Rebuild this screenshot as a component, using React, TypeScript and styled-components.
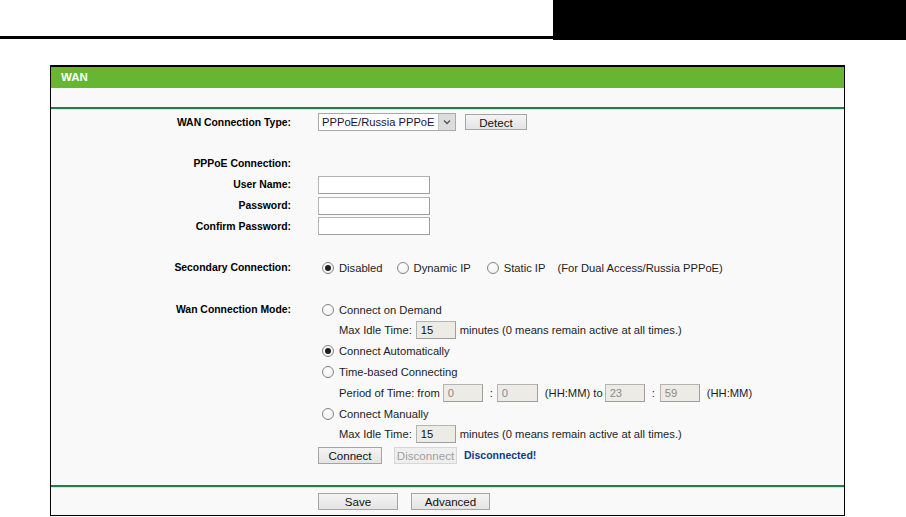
import React from 'react';
import styled, { createGlobalStyle, css } from 'styled-components';

const GlobalStyle = createGlobalStyle`
  html, body {
    margin: 0;
    padding: 0;
    background: #ffffff;
  }
  body {
    font-family: 'Liberation Sans', Arial, sans-serif;
    font-size: 11.2px;
    color: #1c1c24;
  }
`;

const TopBar = styled.div`
  display: flex;
  height: 40px;
`;
const TopRule = styled.div`
  flex: 1;
  border-bottom: 3px solid #000;
  box-sizing: border-box;
  height: 39px;
`;
const TopBlock = styled.div`
  width: 353px;
  background: #000;
`;

const Panel = styled.div`
  box-sizing: border-box;
  width: 795px;
  margin: 25px 0 0 50px;
  border: 1px solid #000;
  border-top-width: 2px;
  background: #f9f9f9;
`;

const PanelTitle = styled.div`
  height: 21px;
  background: #67b632;
  color: #fff;
  font-weight: bold;
  font-size: 11.5px;
  line-height: 21px;
  padding-left: 10px;
`;

const TitleSpacer = styled.div`
  height: 19px;
`;

const GreenRule = styled.div`
  height: 2px;
  background: #2a7a48;
  border-bottom: 1px solid #d6e6dc;
`;

const FormGrid = styled.div`
  display: grid;
  grid-template-columns: 240px 1fr;
  grid-auto-rows: 20.8px;
  column-gap: 27px;
  align-items: center;
  padding: 2px 0 19px;
`;

const Label = styled.div`
  text-align: right;
  font-weight: bold;
  font-size: 10.4px;
  color: #000;
  white-space: nowrap;
`;

const Value = styled.div<{ $indent?: boolean }>`
  display: flex;
  align-items: center;
  white-space: nowrap;
  ${(p) =>
    p.$indent &&
    css`
      padding-left: 21px;
    `}
`;

const Gap = styled.div`
  grid-column: 1 / -1;
`;

const FakeSelect = styled.div`
  box-sizing: border-box;
  width: 138px;
  height: 18px;
  display: flex;
  align-items: stretch;
  border: 1px solid #a9a9a9;
  background: #fff;
  color: #1a1040;
`;
const SelectText = styled.span`
  flex: 1;
  padding-left: 3px;
  line-height: 16px;
`;
const SelectArrow = styled.span`
  width: 16px;
  background: #dcdcdc;
  border-left: 1px solid #c4c4c4;
  display: flex;
  align-items: center;
  justify-content: center;
`;

const TextBox = styled.input<{ $w?: number; $muted?: boolean }>`
  box-sizing: border-box;
  width: ${(p) => p.$w ?? 112}px;
  height: 18px;
  margin: 0;
  padding: 0 4px;
  border: 1px solid #b4b4b4;
  border-right-color: #9e9e9e;
  border-bottom-color: #9e9e9e;
  background: ${(p) => (p.$muted ? '#ecebe6' : '#fff')};
  font-family: 'Liberation Sans', Arial, sans-serif;
  font-size: 11.2px;
  color: ${(p) => (p.$muted ? '#8a8a8a' : '#111')};
  outline: none;
`;

const Btn = styled.button<{ $w: number }>`
  box-sizing: border-box;
  width: ${(p) => p.$w}px;
  height: 17px;
  margin: 0;
  padding: 0;
  border: 1px solid #a4a4a4;
  background: linear-gradient(#f4f4f4, #e4e4e4);
  font-family: 'Liberation Sans', Arial, sans-serif;
  font-size: 11.6px;
  color: #111;
  line-height: 15px;
  &:disabled {
    color: #a0a0a0;
    border-color: #d6d6d6;
    background: #efefef;
  }
`;

const RadioDot = styled.span<{ $on?: boolean }>`
  box-sizing: border-box;
  width: 12px;
  height: 12px;
  margin: 0 5px 0 4px;
  border-radius: 50%;
  border: 1px solid #858585;
  background: radial-gradient(circle at 40% 35%, #fff, #ececec);
  display: inline-flex;
  align-items: center;
  justify-content: center;
  flex: none;
  &::after {
    content: '';
    width: 6px;
    height: 6px;
    border-radius: 50%;
    background: ${(p) => (p.$on ? '#1e1e1e' : 'transparent')};
  }
`;

const Opt = styled.span<{ $after?: number }>`
  margin-right: ${(p) => p.$after ?? 0}px;
`;

const Sep = styled.span<{ $l: number; $r: number }>`
  margin: 0 ${(p) => p.$r}px 0 ${(p) => p.$l}px;
`;

const Status = styled.span`
  margin-left: 7px;
  font-weight: bold;
  font-size: 10.5px;
  color: #0b3c8c;
`;

const Footer = styled.div`
  height: 27px;
  display: flex;
  align-items: center;
  gap: 13px;
  padding-left: 267px;
`;

const Chevron = () => (
  <svg width="8" height="6" viewBox="0 0 8 6">
    <path d="M1 1.5 L4 4.5 L7 1.5" fill="none" stroke="#555" strokeWidth="1.3" />
  </svg>
);

const Radio = ({ on, children, after }: { on?: boolean; children: React.ReactNode; after?: number }) => (
  <>
    <RadioDot $on={on} />
    <Opt $after={after}>{children}</Opt>
  </>
);

const IdleRow = () => (
  <Value $indent>
    <Opt $after={4}>Max Idle Time:</Opt>
    <TextBox $w={40} $muted defaultValue="15" style={{ color: '#111' }} />
    <Opt style={{ marginLeft: 4 }}>minutes (0 means remain active at all times.)</Opt>
  </Value>
);

export default function App() {
  return (
    <>
      <GlobalStyle />
      <TopBar>
        <TopRule />
        <TopBlock />
      </TopBar>
      <Panel>
        <PanelTitle>WAN</PanelTitle>
        <TitleSpacer />
        <GreenRule />
        <FormGrid>
          <Label>WAN Connection Type:</Label>
          <Value>
            <FakeSelect>
              <SelectText>PPPoE/Russia PPPoE</SelectText>
              <SelectArrow>
                <Chevron />
              </SelectArrow>
            </FakeSelect>
            <Btn $w={62} style={{ marginLeft: 9, height: 16 }}>
              Detect
            </Btn>
          </Value>

          <Gap />

          <Label>PPPoE Connection:</Label>
          <Value />
          <Label>User Name:</Label>
          <Value>
            <TextBox defaultValue="" />
          </Value>
          <Label>Password:</Label>
          <Value>
            <TextBox type="password" defaultValue="" />
          </Value>
          <Label>Confirm Password:</Label>
          <Value>
            <TextBox type="password" defaultValue="" />
          </Value>

          <Gap />

          <Label>Secondary Connection:</Label>
          <Value>
            <Radio on after={10}>
              Disabled
            </Radio>
            <Radio after={12}>Dynamic IP</Radio>
            <Radio after={12}>Static IP</Radio>
            <span>(For Dual Access/Russia PPPoE)</span>
          </Value>

          <Gap />

          <Label>Wan Connection Mode:</Label>
          <Value>
            <Radio>Connect on Demand</Radio>
          </Value>
          <div />
          <IdleRow />
          <div />
          <Value>
            <Radio on>Connect Automatically</Radio>
          </Value>
          <div />
          <Value>
            <Radio>Time-based Connecting</Radio>
          </Value>
          <div />
          <Value $indent>
            <Opt $after={3}>Period of Time: from</Opt>
            <TextBox $w={40} $muted disabled defaultValue="0" />
            <Sep $l={7} $r={4}>:</Sep>
            <TextBox $w={41} $muted disabled defaultValue="0" />
            <Sep $l={7} $r={2}>(HH:MM) to</Sep>
            <TextBox $w={40} $muted disabled defaultValue="23" />
            <Sep $l={7} $r={5}>:</Sep>
            <TextBox $w={40} $muted disabled defaultValue="59" />
            <Sep $l={7} $r={0}>(HH:MM)</Sep>
          </Value>
          <div />
          <Value>
            <Radio>Connect Manually</Radio>
          </Value>
          <div />
          <IdleRow />
          <div />
          <Value>
            <Btn $w={64}>Connect</Btn>
            <Btn $w={63} disabled style={{ marginLeft: 12 }}>
              Disconnect
            </Btn>
            <Status>Disconnected!</Status>
          </Value>
        </FormGrid>
        <GreenRule />
        <Footer>
          <Btn $w={80}>Save</Btn>
          <Btn $w={79}>Advanced</Btn>
        </Footer>
      </Panel>
    </>
  );
}
